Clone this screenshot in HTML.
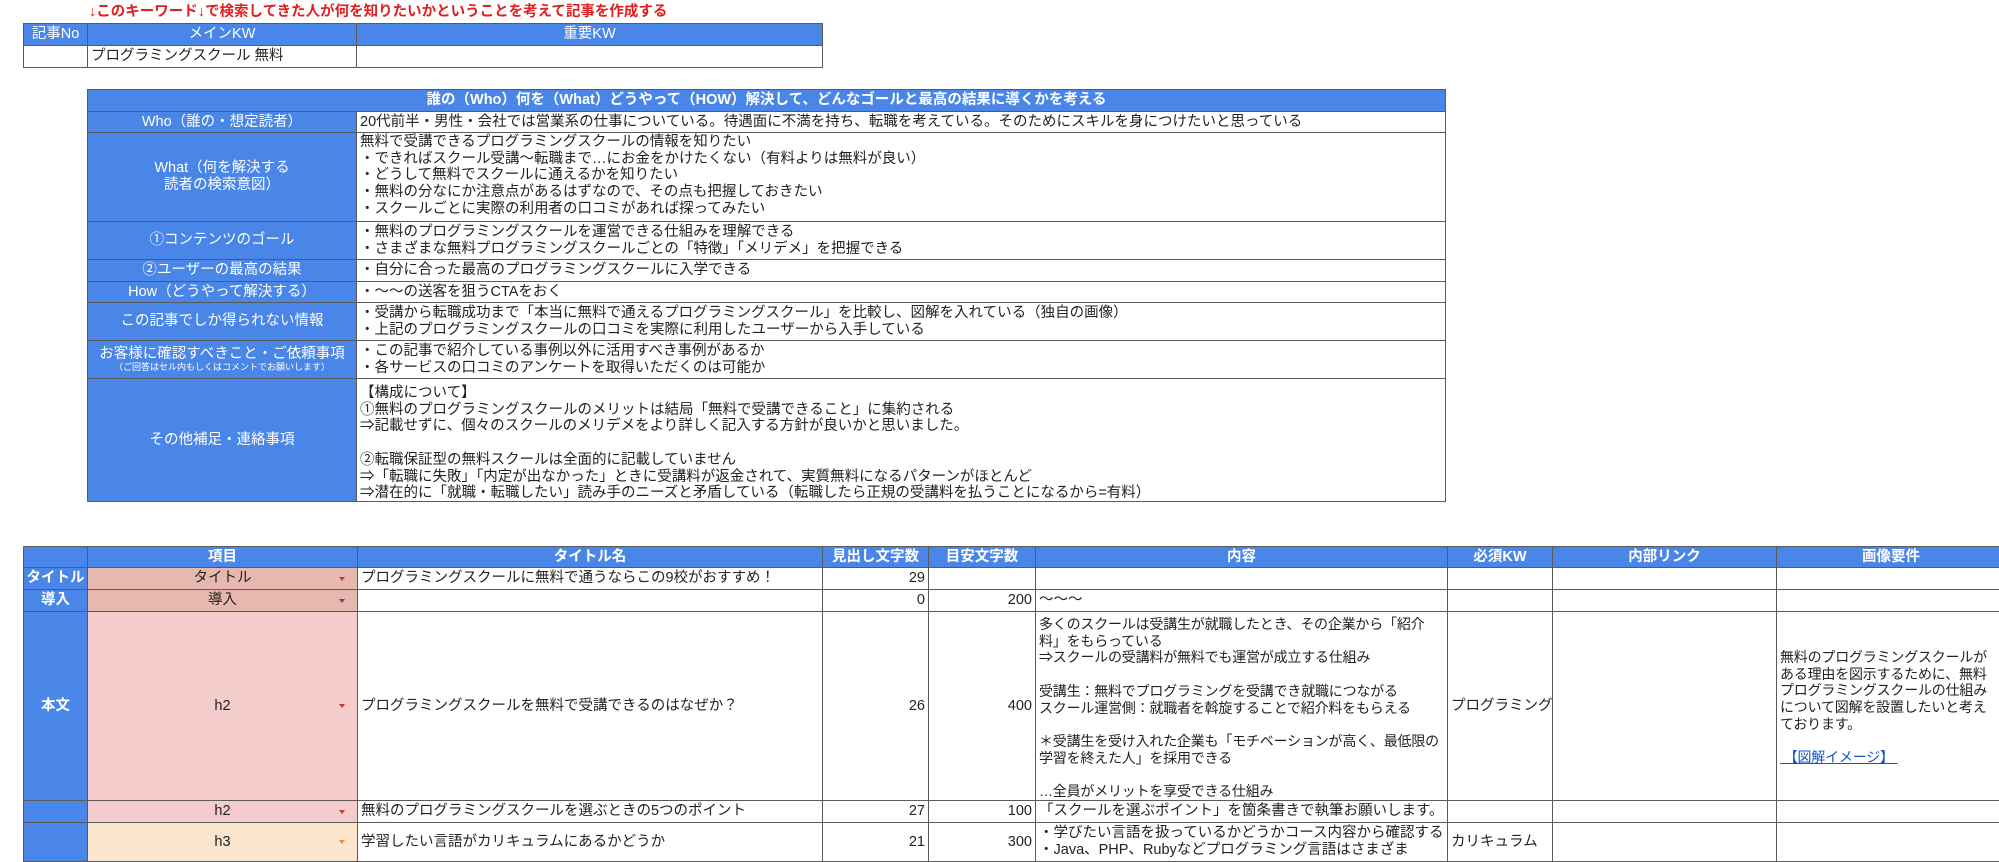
<!DOCTYPE html>
<html><head><meta charset="utf-8">
<style>
*{box-sizing:border-box;margin:0;padding:0}
body{width:1999px;height:861px;background:#fff;position:relative;overflow:hidden;font-family:"Liberation Sans","Noto Sans CJK JP",sans-serif;font-size:14.5px;line-height:16.7px;color:#222}
.c{position:absolute;border:1px solid #5a5a5a;overflow:hidden;white-space:nowrap;padding:0 3px}
.h{background:#4a86e8;color:#fff;font-weight:bold;text-align:center;display:flex;align-items:center;justify-content:center}
.b{background:#4a86e8;color:#fff;text-align:center;display:flex;align-items:center;justify-content:center;flex-direction:column}
.v{display:flex;align-items:center}
.r{display:flex;align-items:center;justify-content:flex-end}
.m{display:flex;align-items:center;justify-content:center}
.t{padding-top:1px}
.sm{font-size:14px;letter-spacing:-0.2px}
.pk{background:#f4cccc}.pd{background:#e6b8af}.or{background:#fce5cd}
.ar{position:absolute;right:12px;top:50%;margin-top:-2px;width:0;height:0;border-left:3.5px solid transparent;border-right:3.5px solid transparent;border-top:4px solid #cc3333}
.or .ar{border-top-color:#e69138}
</style></head><body>
<div style="position:absolute;left:89px;top:4px;color:#e02020;font-weight:bold;font-size:14.5px;white-space:nowrap">↓このキーワード↓で検索してきた人が何を知りたいかということを考えて記事を作成する</div>

<div class="c h" style="left:23px;top:23px;width:65px;height:23px;font-weight:normal">記事No</div>
<div class="c h" style="left:87px;top:23px;width:270px;height:23px;font-weight:normal">メインKW</div>
<div class="c h" style="left:356px;top:23px;width:467px;height:23px;font-weight:normal">重要KW</div>
<div class="c" style="left:23px;top:45px;width:65px;height:23px"></div>
<div class="c v" style="left:87px;top:45px;width:270px;height:23px">プログラミングスクール 無料</div>
<div class="c" style="left:356px;top:45px;width:467px;height:23px"></div>

<div class="c h" style="left:87px;top:89px;width:1359px;height:23px">誰の（Who）何を（What）どうやって（HOW）解決して、どんなゴールと最高の結果に導くかを考える</div>

<div class="c b" style="left:87px;top:111px;width:270px;height:22px">Who（誰の・想定読者）</div>
<div class="c v" style="left:356px;top:111px;width:1090px;height:22px">20代前半・男性・会社では営業系の仕事についている。待遇面に不満を持ち、転職を考えている。そのためにスキルを身につけたいと思っている</div>

<div class="c b" style="left:87px;top:132px;width:270px;height:90px">What（何を解決する<br>読者の検索意図）</div>
<div class="c t" style="left:356px;top:132px;width:1090px;height:90px">無料で受講できるプログラミングスクールの情報を知りたい<br>・できればスクール受講〜転職まで…にお金をかけたくない（有料よりは無料が良い）<br>・どうして無料でスクールに通えるかを知りたい<br>・無料の分なにか注意点があるはずなので、その点も把握しておきたい<br>・スクールごとに実際の利用者の口コミがあれば探ってみたい</div>

<div class="c b" style="left:87px;top:221px;width:270px;height:39px">①コンテンツのゴール</div>
<div class="c v" style="left:356px;top:221px;width:1090px;height:39px">・無料のプログラミングスクールを運営できる仕組みを理解できる<br>・さまざまな無料プログラミングスクールごとの「特徴」「メリデメ」を把握できる</div>

<div class="c b" style="left:87px;top:259px;width:270px;height:23px">②ユーザーの最高の結果</div>
<div class="c v" style="left:356px;top:259px;width:1090px;height:23px">・自分に合った最高のプログラミングスクールに入学できる</div>

<div class="c b" style="left:87px;top:281px;width:270px;height:22px">How（どうやって解決する）</div>
<div class="c v" style="left:356px;top:281px;width:1090px;height:22px">・〜〜の送客を狙うCTAをおく</div>

<div class="c b" style="left:87px;top:302px;width:270px;height:39px">この記事でしか得られない情報</div>
<div class="c v" style="left:356px;top:302px;width:1090px;height:39px">・受講から転職成功まで「本当に無料で通えるプログラミングスクール」を比較し、図解を入れている（独自の画像）<br>・上記のプログラミングスクールの口コミを実際に利用したユーザーから入手している</div>

<div class="c b" style="left:87px;top:340px;width:270px;height:39px">お客様に確認すべきこと・ご依頼事項<span style="font-size:9px;line-height:11px">（ご回答はセル内もしくはコメントでお願いします）</span></div>
<div class="c v" style="left:356px;top:340px;width:1090px;height:39px">・この記事で紹介している事例以外に活用すべき事例があるか<br>・各サービスの口コミのアンケートを取得いただくのは可能か</div>

<div class="c b" style="left:87px;top:378px;width:270px;height:124px">その他補足・連絡事項</div>
<div class="c" style="left:356px;top:378px;width:1090px;height:124px;padding-top:6px">【構成について】<br>①無料のプログラミングスクールのメリットは結局「無料で受講できること」に集約される<br>⇒記載せずに、個々のスクールのメリデメをより詳しく記入する方針が良いかと思いました。<br><br>②転職保証型の無料スクールは全面的に記載していません<br>⇒「転職に失敗」「内定が出なかった」ときに受講料が返金されて、実質無料になるパターンがほとんど<br>⇒潜在的に「就職・転職したい」読み手のニーズと矛盾している（転職したら正規の受講料を払うことになるから=有料）</div>

<!-- table 3 -->
<div class="c h" style="left:23px;top:546px;width:65px;height:22px"></div>
<div class="c h" style="left:87px;top:546px;width:271px;height:22px">項目</div>
<div class="c h" style="left:357px;top:546px;width:466px;height:22px">タイトル名</div>
<div class="c h" style="left:822px;top:546px;width:107px;height:22px">見出し文字数</div>
<div class="c h" style="left:928px;top:546px;width:108px;height:22px">目安文字数</div>
<div class="c h" style="left:1035px;top:546px;width:413px;height:22px">内容</div>
<div class="c h" style="left:1447px;top:546px;width:106px;height:22px">必須KW</div>
<div class="c h" style="left:1552px;top:546px;width:225px;height:22px">内部リンク</div>
<div class="c h" style="left:1776px;top:546px;width:230px;height:22px">画像要件</div>

<!-- row title -->
<div class="c h" style="left:23px;top:567px;width:65px;height:23px">タイトル</div>
<div class="c m pd" style="left:87px;top:567px;width:271px;height:23px">タイトル<span class="ar"></span></div>
<div class="c v" style="left:357px;top:567px;width:466px;height:23px">プログラミングスクールに無料で通うならこの9校がおすすめ！</div>
<div class="c r" style="left:822px;top:567px;width:107px;height:23px">29</div>
<div class="c" style="left:928px;top:567px;width:108px;height:23px"></div>
<div class="c" style="left:1035px;top:567px;width:413px;height:23px"></div>
<div class="c" style="left:1447px;top:567px;width:106px;height:23px"></div>
<div class="c" style="left:1552px;top:567px;width:225px;height:23px"></div>
<div class="c" style="left:1776px;top:567px;width:230px;height:23px"></div>

<!-- row intro -->
<div class="c h" style="left:23px;top:589px;width:65px;height:23px">導入</div>
<div class="c m pd" style="left:87px;top:589px;width:271px;height:23px">導入<span class="ar" style="border-top-color:#555"></span></div>
<div class="c" style="left:357px;top:589px;width:466px;height:23px"></div>
<div class="c r" style="left:822px;top:589px;width:107px;height:23px">0</div>
<div class="c r" style="left:928px;top:589px;width:108px;height:23px">200</div>
<div class="c v" style="left:1035px;top:589px;width:413px;height:23px">〜〜〜</div>
<div class="c" style="left:1447px;top:589px;width:106px;height:23px"></div>
<div class="c" style="left:1552px;top:589px;width:225px;height:23px"></div>
<div class="c" style="left:1776px;top:589px;width:230px;height:23px"></div>

<!-- row body h2 -->
<div class="c h" style="left:23px;top:611px;width:65px;height:190px">本文</div>
<div class="c m pk" style="left:87px;top:611px;width:271px;height:190px">h2<span class="ar"></span></div>
<div class="c v" style="left:357px;top:611px;width:466px;height:190px">プログラミングスクールを無料で受講できるのはなぜか？</div>
<div class="c r" style="left:822px;top:611px;width:107px;height:190px">26</div>
<div class="c r" style="left:928px;top:611px;width:108px;height:190px">400</div>
<div class="c sm" style="left:1035px;top:611px;width:413px;height:190px;padding-top:4px">多くのスクールは受講生が就職したとき、その企業から「紹介<br>料」をもらっている<br>⇒スクールの受講料が無料でも運営が成立する仕組み<br><br>受講生：無料でプログラミングを受講でき就職につながる<br>スクール運営側：就職者を斡旋することで紹介料をもらえる<br><br>＊受講生を受け入れた企業も「モチベーションが高く、最低限の<br>学習を終えた人」を採用できる<br><br>…全員がメリットを享受できる仕組み</div>
<div class="c v" style="left:1447px;top:611px;width:106px;height:190px">プログラミング</div>
<div class="c" style="left:1552px;top:611px;width:225px;height:190px"></div>
<div class="c sm" style="left:1776px;top:611px;width:230px;height:190px;padding-top:37px;padding-left:3px">無料のプログラミングスクールが<br>ある理由を図示するために、無料<br>プログラミングスクールの仕組み<br>について図解を設置したいと考え<br>ております。<br><br><span style="color:#1155cc;text-decoration:underline">&nbsp;【図解イメージ】&nbsp;</span></div>

<!-- row h2 -->
<div class="c h" style="left:23px;top:800px;width:65px;height:23px"></div>
<div class="c m pk" style="left:87px;top:800px;width:271px;height:23px">h2<span class="ar"></span></div>
<div class="c v" style="left:357px;top:800px;width:466px;height:23px">無料のプログラミングスクールを選ぶときの5つのポイント</div>
<div class="c r" style="left:822px;top:800px;width:107px;height:23px">27</div>
<div class="c r" style="left:928px;top:800px;width:108px;height:23px">100</div>
<div class="c v" style="left:1035px;top:800px;width:413px;height:23px">「スクールを選ぶポイント」を箇条書きで執筆お願いします。</div>
<div class="c" style="left:1447px;top:800px;width:106px;height:23px"></div>
<div class="c" style="left:1552px;top:800px;width:225px;height:23px"></div>
<div class="c" style="left:1776px;top:800px;width:230px;height:23px"></div>

<!-- row h3 -->
<div class="c h" style="left:23px;top:822px;width:65px;height:40px"></div>
<div class="c m or" style="left:87px;top:822px;width:271px;height:40px">h3<span class="ar"></span></div>
<div class="c v" style="left:357px;top:822px;width:466px;height:40px">学習したい言語がカリキュラムにあるかどうか</div>
<div class="c r" style="left:822px;top:822px;width:107px;height:40px">21</div>
<div class="c r" style="left:928px;top:822px;width:108px;height:40px">300</div>
<div class="c v" style="left:1035px;top:822px;width:413px;height:40px">・学びたい言語を扱っているかどうかコース内容から確認する<br>・Java、PHP、Rubyなどプログラミング言語はさまざま</div>
<div class="c v" style="left:1447px;top:822px;width:106px;height:40px">カリキュラム</div>
<div class="c" style="left:1552px;top:822px;width:225px;height:40px"></div>
<div class="c" style="left:1776px;top:822px;width:230px;height:40px"></div>
</body></html>
